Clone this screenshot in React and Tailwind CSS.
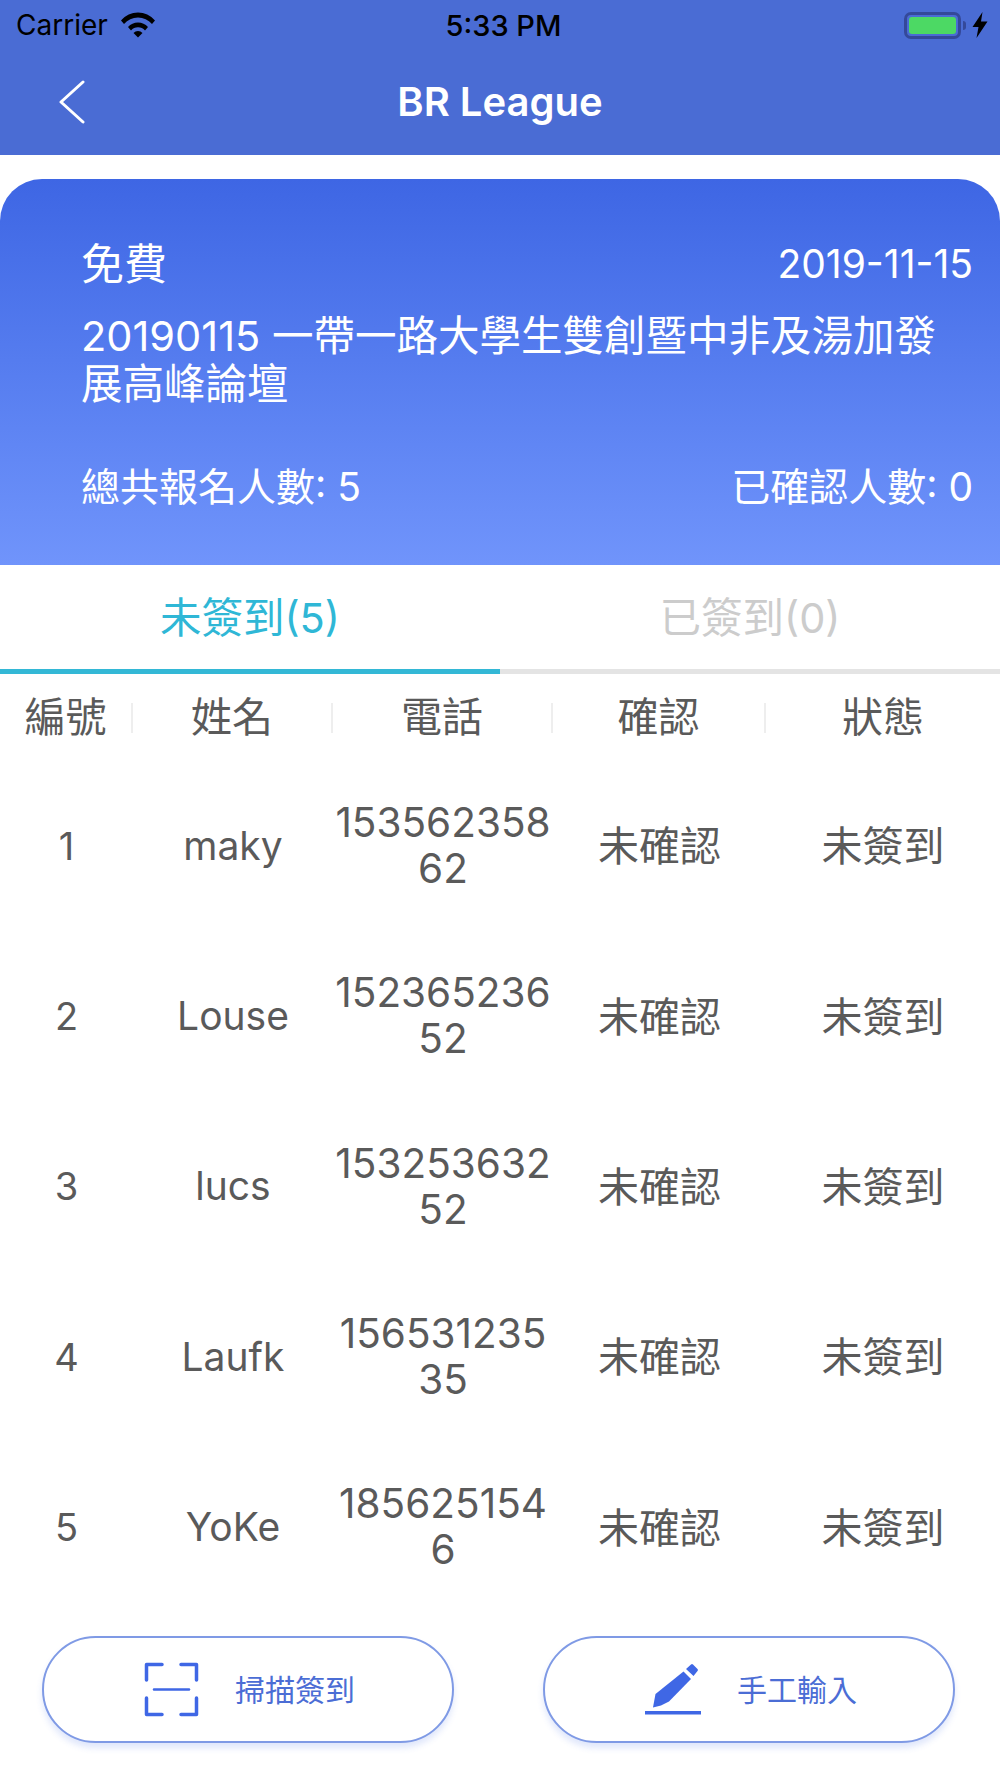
const rows = [
  ["1", "maky", "153562358", "62"],
  ["2", "Louse", "152365236", "52"],
  ["3", "lucs", "153253632", "52"],
  ["4", "Laufk", "156531235", "35"],
  ["5", "YoKe", "185625154", "6"],
];

const FONT = "font-['Inter','Noto_Sans_CJK_TC',sans-serif]";

function Wifi() {
  return (
    <svg width="34" height="26" viewBox="0 0 34 26" fill="#000">
      <path d="M0 8.500C4.500 3.200 10.500 0.500 17 0.500S29.500 3.200 34 8.500L31 12C27.300 7.800 22.500 5.500 17 5.500S6.700 7.800 3 12Z" />
      <path d="M7 15C9.600 12.200 13.100 10.500 17 10.500S24.400 12.200 27 15L24 18.500C22.200 16.500 19.800 15.300 17 15.300S11.800 16.500 10 18.500Z" />
      <path d="M12.500 21C13.700 19.800 15.300 19 17 19S20.300 19.800 21.500 21L17 25.500Z" />
    </svg>
  );
}

function Battery() {
  return (
    <div className="flex items-center">
      <div className="w-[57px] h-[27px] rounded-[7px] border-[3px] border-[#34499a] p-[2px]">
        <div className="w-full h-full rounded-[3px] bg-[#4cd964]" />
      </div>
      <div className="w-[3px] h-[9px] ml-[2px] rounded-r-[3px] bg-[#34499a]" />
      <svg className="ml-[6px]" width="16" height="26" viewBox="0 0 16 26" fill="#000">
        <path d="M10.500 0L0.500 15H6.500L4.500 26L15.500 9.500H9Z" />
      </svg>
    </div>
  );
}

function ScanIcon() {
  return (
    <svg width="55" height="55" viewBox="0 0 55 55" fill="none" stroke="#3f67e5" strokeWidth="3.500" strokeLinecap="round" strokeLinejoin="round">
      <path d="M18 2.500H2.500V18" />
      <path d="M37 2.500H52.500V18" />
      <path d="M2.500 36V52.500H18" />
      <path d="M52.500 36V52.500H37" />
      <path d="M10 27.500H45" strokeWidth="2.500" />
    </svg>
  );
}

function PenIcon() {
  return (
    <svg width="56" height="55" viewBox="0 0 56 55" fill="#3f67e5">
      <path d="M38.500 9.500L46 17L24 39.500L16 43.500L8 45.500L10.500 32Z" />
      <path d="M41 7L46 2.500Q47 1.500 48 2.500L52.500 7Q53.500 8 52.500 9L48.500 14Z" />
      <rect x="0" y="49" width="56" height="3.500" />
    </svg>
  );
}

function Btn({ icon, label }) {
  return (
    <div className="w-[412px] h-[107px] rounded-full border-2 border-[#7f9ae5] bg-white shadow-[0_5px_6px_rgba(63,103,229,0.16)] flex items-center pl-[100px]">
      {icon}
      <span className="ml-[36px] text-[30px] leading-[40px] text-[#4b6dd5]">{label}</span>
    </div>
  );
}

export default function App() {
  return (
    <div className={`w-[1000px] h-[1778px] bg-white overflow-hidden flex flex-col ${FONT}`}>
      <header className="h-[155px] bg-[#4a6cd4] flex flex-col">
        <div className="h-[50px] pl-[16px] pr-[12px] flex items-center justify-between text-[28px] text-black">
          <div className="flex items-center gap-[13px] w-[300px]">
            <span>Carrier</span>
            <Wifi />
          </div>
          <span className="font-medium text-[29px] pl-[3px] pt-[1px]">5:33 PM</span>
          <div className="w-[300px] flex justify-end">
            <Battery />
          </div>
        </div>
        <div className="relative flex-1 flex items-center justify-center pb-[1px]">
          <svg className="absolute left-[58px] top-[30px]" width="28" height="44" viewBox="0 0 28 44" fill="none" stroke="#fff" strokeWidth="3" strokeLinecap="round" strokeLinejoin="round">
            <path d="M25 2L3 22L25 42" />
          </svg>
          <span className="text-[40px] font-semibold text-white leading-[50px]">BR League</span>
        </div>
      </header>

      <section className="mt-[24px] h-[386px] rounded-t-[42px] bg-gradient-to-b from-[#3e66e4] to-[#7094fb] text-white pl-[81px] pr-[27px] pt-[50px]">
        <div className="flex items-center justify-between h-[70px]">
          <span className="text-[43px] leading-[70px]">免費</span>
          <span className="text-[39px]">2019-11-15</span>
        </div>
        <p className="mt-[13px] text-[41.500px] leading-[48px] w-[880px]">20190115 一帶一路大學生雙創暨中非及湯加發展高峰論壇</p>
        <div className="mt-[54px] flex items-center justify-between text-[39px] leading-[50px]">
          <span>總共報名人數: 5</span>
          <span>已確認人數: 0</span>
        </div>
      </section>

      <nav className="h-[109px] grid grid-cols-2 text-[41.500px]">
        <div className="flex items-center justify-center border-b-[5px] border-[#33b8d6] text-[#2fb7d6] pt-[2px]">未簽到(5)</div>
        <div className="flex items-center justify-center border-b-[5px] border-[#e4e4e4] text-[#cccccc] pt-[2px]">已簽到(0)</div>
      </nav>

      <div className="grid grid-cols-[133px_200px_220px_213px_234px] h-[87px] items-center text-center text-[41px] text-[#5a5a5a]">
        {["編號", "姓名", "電話", "確認", "狀態"].map((h, i) => (
          <div key={h} className={`h-[30px] flex items-center justify-center ${i < 4 ? "border-r-2 border-[#eeeeee]" : ""}`}>
            {h}
          </div>
        ))}
      </div>

      <div>
        {rows.map(([n, name, a, b]) => (
          <div key={n} className="grid grid-cols-[133px_200px_220px_213px_234px] h-[170.300px] items-center text-center text-[41px] text-[#5a5a5a]">
            <div className="text-[38px]">{n}</div>
            <div className="text-[39px]">{name}</div>
            <div className="text-[40.500px] leading-[46px]">
              <div>{a}</div>
              <div>{b}</div>
            </div>
            <div className="pt-[2px]">未確認</div>
            <div className="pt-[2px]">未簽到</div>
          </div>
        ))}
      </div>

      <div className="mt-[24px] pl-[42px] pr-[45px] flex justify-between">
        <Btn icon={<ScanIcon />} label="掃描簽到" />
        <Btn icon={<PenIcon />} label="手工輸入" />
      </div>
    </div>
  );
}
